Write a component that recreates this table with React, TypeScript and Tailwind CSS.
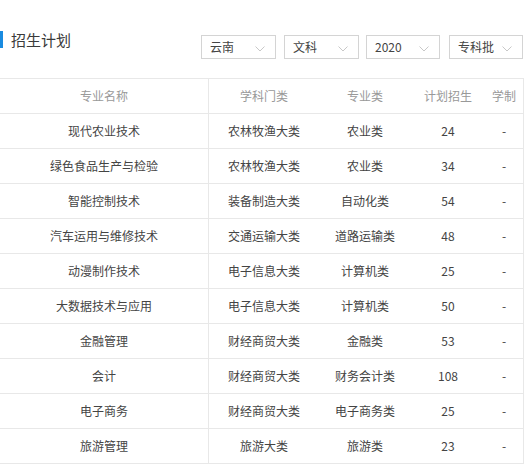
const rows = [
  ["现代农业技术", "农林牧渔大类", "农业类", "24", "-"],
  ["绿色食品生产与检验", "农林牧渔大类", "农业类", "34", "-"],
  ["智能控制技术", "装备制造大类", "自动化类", "54", "-"],
  ["汽车运用与维修技术", "交通运输大类", "道路运输类", "48", "-"],
  ["动漫制作技术", "电子信息大类", "计算机类", "25", "-"],
  ["大数据技术与应用", "电子信息大类", "计算机类", "50", "-"],
  ["金融管理", "财经商贸大类", "金融类", "53", "-"],
  ["会计", "财经商贸大类", "财务会计类", "108", "-"],
  ["电子商务", "财经商贸大类", "电子商务类", "25", "-"],
  ["旅游管理", "旅游大类", "旅游类", "23", "-"],
];

const selects = [
  { label: "云南", cls: "w-[75px]" },
  { label: "文科", cls: "w-[75px] ml-[8px]" },
  { label: "2020", cls: "w-[74px] ml-[7px]" },
  { label: "专科批", cls: "w-[74px] ml-[9px]" },
];

function Chevron() {
  return (
    <svg width="10" height="6" viewBox="0 0 10 6" className="absolute right-[10px] top-[10px]">
      <path d="M0.5 0.5 L5 5 L9.5 0.5" fill="none" stroke="#c8c8c8" strokeWidth="1" />
    </svg>
  );
}

const cols = "grid grid-cols-[209px_110px_92px_74px_38px]";

export default function App() {
  return (
    <div
      className="w-[529px] h-[466px] bg-white overflow-hidden text-[#444]"
      style={{ fontFamily: '"Noto Sans CJK SC", "Microsoft YaHei", sans-serif' }}
    >
      <div className="flex items-start">
        <div className="mt-[31px] h-[17px] border-l-[3px] border-[#1a8be0] pl-[8px] text-[15px] leading-[17px] text-[#3a3a3a]">
          招生计划
        </div>
        <div className="mt-[35px] ml-[130px] flex">
          {selects.map((s) => (
            <div
              key={s.label}
              className={`${s.cls} relative h-[24px] border border-[#d4d4d4] pl-[8px] text-[12px] leading-[22px] text-[#444]`}
            >
              {s.label}
              <Chevron />
            </div>
          ))}
        </div>
      </div>

      <div className="mt-[19px] w-[524px] border-t border-r border-[#e8e8e8] text-[12px]">
        <div className={`${cols} h-[35px] border-b border-[#e8e8e8] text-[#999] items-center text-center`}>
          <div className="h-full leading-[34px] border-r border-[#e8e8e8]">专业名称</div>
          <div>学科门类</div>
          <div>专业类</div>
          <div>计划招生</div>
          <div>学制</div>
        </div>
        {rows.map((r) => (
          <div key={r[0]} className={`${cols} h-[35px] border-b border-[#e8e8e8] items-center text-center`}>
            <div className="h-full leading-[34px] border-r border-[#e8e8e8]">{r[0]}</div>
            <div>{r[1]}</div>
            <div>{r[2]}</div>
            <div>{r[3]}</div>
            <div>{r[4]}</div>
          </div>
        ))}
      </div>
    </div>
  );
}
